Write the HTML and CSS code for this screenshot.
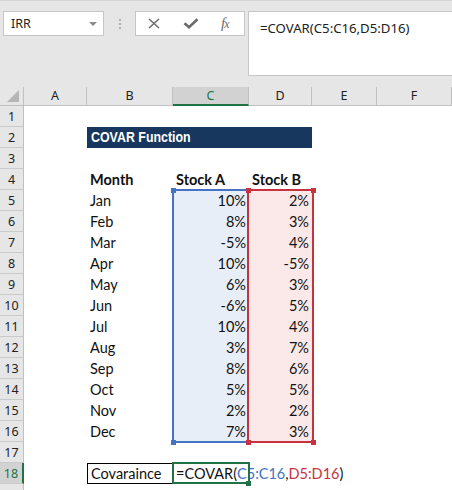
FILE: index.html
```html
<!DOCTYPE html>
<html lang="en">
<head>
  <meta charset="UTF-8">
  <title>COVAR Function</title>
  <link rel="stylesheet" href="styles.css">
</head>
<body>
  <div class="toolbar">
    <div class="namebox"><span>IRR</span><span class="caret"></span></div>
    <div class="grip"><i></i><i></i><i></i></div>
    <div class="fbuttons">
      <svg class="ic-x" width="12" height="11" viewBox="0 0 12 11"><path d="M1 1L11 10M11 1L1 10" stroke="#6b6b6b" stroke-width="1.5" fill="none"/></svg>
      <svg class="ic-ok" width="16" height="11" viewBox="0 0 16 11"><path d="M1.5 5.2L6 9.2L14.5 1.2" stroke="#6b6b6b" stroke-width="2.6" fill="none"/></svg>
      <span class="fx">f<i>x</i></span>
    </div>
    <div class="formula">=COVAR(C5:C16,D5:D16)</div>
  </div>

  <div class="sheet" id="sheet">
    <div class="range range-c"><b class="h tl"></b><b class="h bl"></b></div>
    <div class="range range-d"><b class="h tl"></b><b class="h tr"></b><b class="h bl"></b><b class="h br"></b></div>
    <div class="active"><b class="h br"></b></div>
  </div>

  <script>
    const months = ["Jan", "Feb", "Mar", "Apr", "May", "Jun", "Jul", "Aug", "Sep", "Oct", "Nov", "Dec"];
    const stockA = [10, 8, -5, 10, 6, -6, 10, 3, 8, 5, 2, 7];
    const stockB = [2, 3, 4, -5, 3, 5, 4, 7, 6, 5, 2, 3];

    const sheet = document.getElementById("sheet");
    let html = '<div class="corner"><span></span></div>';
    ["A", "B", "C", "D", "E", "F"].forEach((c) => {
      html += `<div class="colhead${c === "C" ? " sel" : ""}">${c}</div>`;
    });

    for (let r = 1; r <= 19; r++) {
      // row 19 only peeks in under the last row
      html += `<div class="rowhead${r === 18 ? " sel" : ""}">${r < 19 ? r : ""}</div>`;
      if (r === 2) {
        html += '<div class="cell"></div><div class="cell title"><span>COVAR Function</span></div><div class="cell"></div><div class="cell"></div>';
        continue;
      }
      let b = "", c = "", d = "";
      let bc = "cell", cc = "cell", dc = "cell";
      if (r === 4) {
        b = "Month"; c = "Stock A"; d = "Stock B";
        bc = cc = dc = "cell bold";
      } else if (r >= 5 && r <= 16) {
        const i = r - 5;
        b = months[i];
        c = stockA[i] + "%";
        d = stockB[i] + "%";
        cc = "cell num fill-c";
        dc = "cell num fill-d";
      } else if (r === 18) {
        b = "Covaraince";
        bc = "cell boxed";
        c = '=COVAR(<span class="ref-c">C5:C16</span>,<span class="ref-d">D5:D16</span>)<span class="caret-line"></span>';
      }
      html += `<div class="cell"></div><div class="${bc}">${b}</div><div class="${cc}">${c}</div><div class="${dc}">${d}</div><div class="cell"></div><div class="cell"></div>`;
    }
    sheet.insertAdjacentHTML("beforeend", html);
  </script>
</body>
</html>
```

FILE: styles.css
```css
* {
  margin: 0;
  padding: 0;
  box-sizing: border-box;
}

body {
  width: 452px;
  height: 490px;
  overflow: hidden;
  background-color: #fff;
  font-family: 'Noto Sans', 'Open Sans', sans-serif;
}

.toolbar {
  height: 87px;
  background-color: #e6e6e6;
  border-top: 1px solid #d6d6d6;
  display: flex;
  align-items: flex-start;
  padding: 10px 0 0 3px;
}

.namebox {
  width: 101px;
  height: 25px;
  background-color: #fff;
  border: 1px solid #c6c6c6;
  display: flex;
  align-items: center;
  justify-content: space-between;
  padding: 0 6px 0 7px;
  font-size: 12.5px;
  color: #222;
}

.namebox .caret {
  width: 0;
  height: 0;
  border-left: 4px solid transparent;
  border-right: 4px solid transparent;
  border-top: 4px solid #8a8a8a;
}

.grip {
  width: 31px;
  height: 25px;
  display: flex;
  flex-direction: column;
  align-items: center;
  justify-content: center;
  gap: 2px;
}

.grip i {
  width: 2px;
  height: 2px;
  background-color: #b4b4b4;
}

.fbuttons {
  width: 110px;
  height: 25px;
  background-color: #fff;
  border: 1px solid #c6c6c6;
  display: flex;
  align-items: center;
  padding-left: 12px;
}

.fbuttons .ic-ok {
  margin-left: 23px;
}

.fx {
  margin-left: 22px;
  font-family: 'Liberation Serif', serif;
  font-style: italic;
  font-size: 15px;
  color: #6b6b6b;
  letter-spacing: -1px;
}

.fx i {
  font-size: 12px;
}

.formula {
  flex: 1;
  height: 65px;
  margin-left: 3px;
  margin-right: -2px;
  background-color: #fff;
  border: 1px solid #c6c6c6;
  padding: 7px 0 0 11px;
  font-size: 13.2px;
  color: #222;
}

.sheet {
  position: relative;
  display: grid;
  grid-template-columns: 24px 63px 86px 76px 63px 65px 75px;
  grid-template-rows: 19px repeat(19, 21px);
}

.corner {
  background-color: #e6e6e6;
  border-right: 1px solid #c0c0c0;
  border-bottom: 1px solid #c0c0c0;
  position: relative;
}

.corner span {
  position: absolute;
  right: 4px;
  bottom: 3px;
  width: 0;
  height: 0;
  border-left: 12px solid transparent;
  border-bottom: 12px solid #b5b5b5;
}

.colhead {
  background-color: #e6e6e6;
  border-right: 1px solid #c0c0c0;
  border-bottom: 1px solid #c0c0c0;
  font-size: 12.5px;
  color: #222;
  text-align: center;
  line-height: 18px;
}

.colhead.sel {
  background-color: #d2d2d2;
  border-bottom: 2px solid #217346;
  color: #217346;
}

.rowhead {
  background-color: #e6e6e6;
  border-right: 1px solid #c0c0c0;
  border-bottom: 1px solid #cacaca;
  font-size: 12.5px;
  color: #222;
  text-align: center;
  line-height: 21px;
}

.rowhead.sel {
  background-color: #d2d2d2;
  border-right: 2px solid #217346;
  color: #217346;
}

.cell {
  display: flex;
  align-items: flex-end;
  padding: 0 3px 2px;
  white-space: nowrap;
  font-family: Lato, 'Liberation Sans', sans-serif;
  font-size: 14.5px;
  color: #111;
  line-height: 17px;
}

.cell.bold {
  font-weight: bold;
}

.cell.num {
  justify-content: flex-end;
}

.fill-c {
  background-color: #e8eef8;
}

.fill-d {
  background-color: #fbe9e9;
}

.cell.title {
  grid-column: span 3;
  background-color: #17375e;
  color: #fff;
  font-family: 'Liberation Sans', sans-serif;
  font-weight: bold;
  font-size: 15.5px;
  padding-left: 4px;
  padding-bottom: 3px;
}

.cell.title span {
  display: inline-block;
  transform: scaleX(0.8);
  transform-origin: left bottom;
}

.cell.boxed {
  border: 1px solid #000;
  padding-bottom: 1px;
}

.ref-c {
  color: #4472c4;
}

.ref-d {
  color: #c8323f;
}

.caret-line {
  display: inline-block;
  width: 2px;
  height: 18px;
  margin-left: 2px;
  background-color: #000;
  align-self: center;
}

.range,
.active {
  position: absolute;
  top: 102px;
  height: 254px;
}

.range-c {
  left: 172px;
  width: 77px;
  border: 2px solid #4472c4;
}

.range-d {
  left: 247px;
  width: 67px;
  border: 2px solid #c8323f;
}

.active {
  top: 375px;
  left: 172px;
  width: 78px;
  height: 22px;
  border: 2px solid #217346;
}

.h {
  position: absolute;
  width: 5px;
  height: 5px;
}

.range-c .h {
  background-color: #4472c4;
}

.range-d .h {
  background-color: #c8323f;
}

.active .h {
  background-color: #217346;
  right: -3px;
  bottom: -4px;
}

.range .tl { left: -3.5px; top: -3.5px; }
.range .tr { right: -3.5px; top: -3.5px; }
.range .bl { left: -3.5px; bottom: -3.5px; }
.range .br { right: -3.5px; bottom: -3.5px; }
```
